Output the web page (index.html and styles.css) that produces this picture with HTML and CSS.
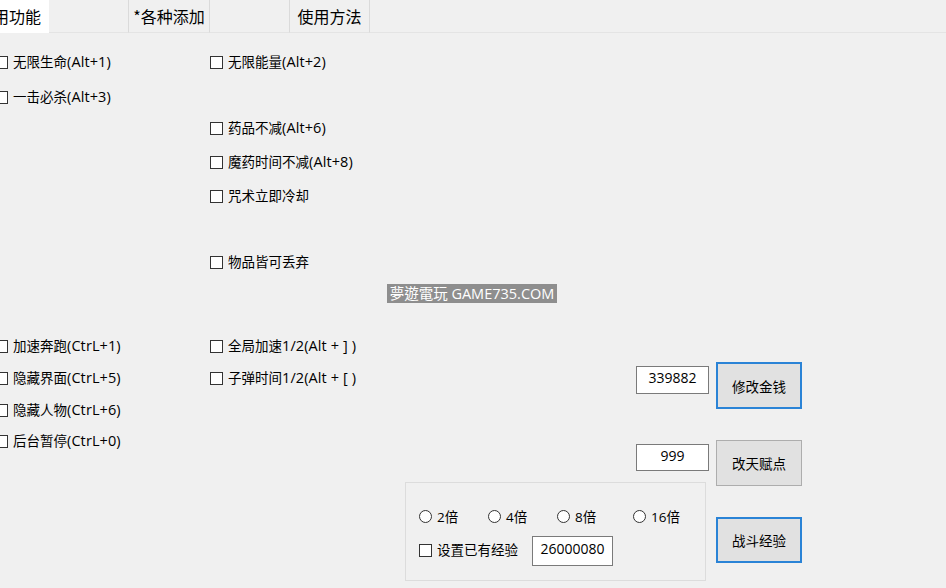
FILE: index.html
```html
<!DOCTYPE html>
<html>
<head>
<meta charset="utf-8">
<link rel="stylesheet" href="styles.css">
</head>
<body>
<div class="window">
  <div class="tabs">
    <div class="tab tab-active"><span class="tab-scrolled">通用功能</span></div>
    <div class="tab tab-w80"></div>
    <div class="tab tab-w81">*各种添加</div>
    <div class="tab tab-w80"></div>
    <div class="tab tab-w80">使用方法</div>
    <div class="tab tab-rest"></div>
  </div>
  <div class="main">
    <div class="checks">
      <label class="chk"><span class="box"></span>无限生命<span class="k">(Alt+1)</span></label>
      <label class="chk"><span class="box"></span>无限能量<span class="k">(Alt+2)</span></label>

      <label class="chk"><span class="box"></span>一击必杀<span class="k">(Alt+3)</span></label>
      <div class="cell"></div>

      <div class="cell"></div>
      <label class="chk"><span class="box"></span>药品不减<span class="k">(Alt+6)</span></label>

      <div class="cell"></div>
      <label class="chk"><span class="box"></span>魔药时间不减<span class="k">(Alt+8)</span></label>

      <div class="cell"></div>
      <label class="chk"><span class="box"></span>咒术立即冷却</label>

      <div class="cell"></div>
      <label class="chk"><span class="box"></span>物品皆可丢弃</label>

      <label class="chk"><span class="box"></span>加速奔跑<span class="k">(CtrL+1)</span></label>
      <label class="chk"><span class="box"></span>全局加速<span class="k">1/2(Alt + ] )</span></label>

      <label class="chk"><span class="box"></span>隐藏界面<span class="k">(CtrL+5)</span></label>
      <label class="chk"><span class="box"></span>子弹时间<span class="k">1/2(Alt + [ )</span></label>

      <label class="chk"><span class="box"></span>隐藏人物<span class="k">(CtrL+6)</span></label>
      <div class="cell"></div>

      <label class="chk"><span class="box"></span>后台暂停<span class="k">(CtrL+0)</span></label>
      <div class="cell"></div>
    </div>
    <div class="cluster">
      <div class="row">
        <div class="row-left"><div class="field field-money">339882</div></div>
        <div class="btn btn-focus btn-money">修改金钱</div>
      </div>
      <div class="row row-2">
        <div class="row-left"><div class="field field-talent">999</div></div>
        <div class="btn btn-talent">改天赋点</div>
      </div>
      <div class="row row-3">
        <div class="group">
          <div class="radios">
            <label class="rad"><span class="circle"></span>2倍</label>
            <label class="rad"><span class="circle"></span>4倍</label>
            <label class="rad"><span class="circle"></span>8倍</label>
            <label class="rad"><span class="circle"></span>16倍</label>
          </div>
          <div class="exp-row">
            <label class="chk chk-exp"><span class="box"></span>设置已有经验</label>
            <div class="field field-exp">26000080</div>
          </div>
        </div>
        <div class="btn btn-focus btn-exp">战斗经验</div>
      </div>
    </div>
  </div>
  <div class="watermark">夢遊電玩 GAME735.COM</div>
</div>
</body>
</html>
```
FILE: styles.css
```css
html, body {
  margin: 0;
  padding: 0;
}
body {
  width: 946px;
  height: 588px;
  overflow: hidden;
  background: #f0f0f0;
  font-family: "Open Sans", "Noto Sans CJK SC", sans-serif;
  color: #000;
}
.window {
  position: relative;
  width: 946px;
  height: 588px;
  overflow: hidden;
}
.tabs {
  display: flex;
  height: 33px;
  box-sizing: border-box;
}
.tab {
  box-sizing: border-box;
  height: 33px;
  border-right: 1px solid #dadada;
  border-bottom: 1px solid #e4e4e4;
  font-size: 16px;
  line-height: 33px;
  text-align: center;
  white-space: nowrap;
  overflow: hidden;
  font-family: "Noto Sans CJK SC", sans-serif;
}
.tab-active {
  width: 49px;
  background: #fff;
  border-right: none;
  border-bottom: none;
  text-align: left;
}
.tab-scrolled {
  display: inline-block;
  margin-left: -23px;
}
.tab-w80 { width: 80px; }
.tab-w81 { width: 81px; }
.tab-rest { flex: 1; border-right: none; }

.main {
  display: flex;
  padding-top: 19px;
}
.checks {
  display: grid;
  margin-left: -5px;
  grid-template-columns: 215px 195px;
  grid-template-rows: 35px 31px 34px 34px 66px 84px 32px 32px 31px 20px;
}
.chk {
  display: flex;
  align-items: center;
  height: 20px;
  line-height: 20px;
  white-space: nowrap;
  font-size: 13.5px;
}
.k {
  font-size: 14.5px;
  letter-spacing: 0.1px;
}
.box {
  display: inline-block;
  box-sizing: border-box;
  width: 13px;
  height: 13px;
  border: 1px solid #333;
  background: #fff;
  margin-right: 5px;
  flex: none;
}
.cluster {
  margin-top: 310px;
  display: flex;
  flex-direction: column;
}
.row {
  display: flex;
  align-items: flex-start;
}
.row-2 { margin-top: 31px; }
.row-3 { margin-top: -4px; }
.row-left {
  width: 311px;
  display: flex;
  justify-content: flex-end;
  padding-top: 4px;
}
.field {
  box-sizing: border-box;
  background: #fff;
  border: 1px solid #7a7a7a;
  text-align: center;
  font-size: 14px;
  white-space: nowrap;
}
.field-money {
  width: 73px;
  height: 28px;
  line-height: 22px;
  margin-right: 7px;
}
.field-talent {
  width: 73px;
  height: 27px;
  line-height: 21px;
  margin-right: 7px;
}
.field-exp {
  width: 81px;
  height: 30px;
  line-height: 24px;
  margin-top: 2px;
}
.btn {
  box-sizing: border-box;
  width: 86px;
  background: #e1e1e1;
  border: 1px solid #adadad;
  display: flex;
  align-items: center;
  justify-content: center;
  font-size: 13.5px;
  font-family: "Noto Sans CJK SC", sans-serif;
}
.btn-focus {
  border: 2px solid #2a83d6;
}
.btn-money { height: 47px; }
.btn-talent { height: 46px; }
.btn-exp {
  height: 46px;
  margin-top: 35px;
}
.group {
  box-sizing: border-box;
  width: 301px;
  height: 99px;
  border: 1px solid #dcdcdc;
  margin-right: 10px;
  padding: 23px 0 0 13px;
}
.radios {
  display: grid;
  grid-template-columns: 69px 69px 76px auto;
  height: 20px;
}
.rad {
  display: flex;
  align-items: center;
  height: 20px;
  font-size: 13.5px;
  white-space: nowrap;
}
.circle {
  display: inline-block;
  box-sizing: border-box;
  width: 13px;
  height: 13px;
  border: 1px solid #333;
  border-radius: 50%;
  background: #fff;
  margin-right: 5px;
  flex: none;
}
.exp-row {
  display: flex;
  align-items: center;
  margin-top: 8px;
}
.chk-exp {
  width: 113px;
}
.watermark {
  position: absolute;
  left: 387px;
  top: 284px;
  width: 170px;
  height: 19px;
  background: #8e8e8e;
  color: #fff;
  font-size: 14.5px;
  line-height: 19px;
  text-align: center;
  white-space: nowrap;
  font-family: "Open Sans", "Noto Sans CJK TC", sans-serif;
}
```
